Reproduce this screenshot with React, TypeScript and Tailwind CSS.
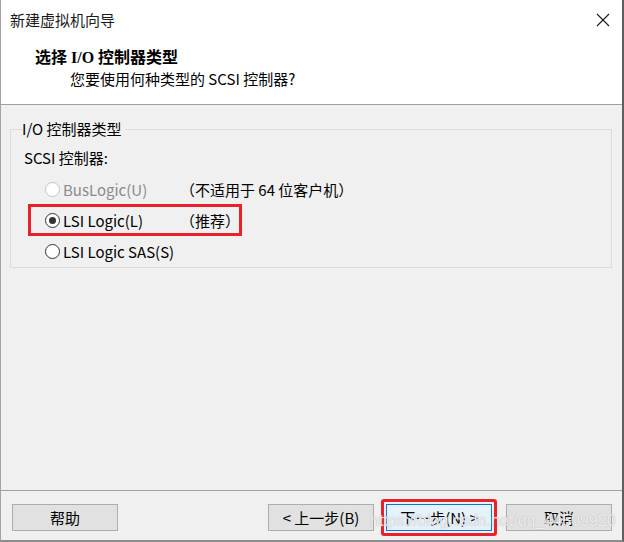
import React from 'react';

const font = { fontFamily: '"Noto Sans CJK SC", "Noto Sans", sans-serif' };

export default function App() {
  return (
    <div
      className="relative box-border flex h-[542px] w-[624px] flex-col border-b-2 border-l border-r-2 border-b-[#8c8c8c] border-l-[#a3a3a3] border-r-[#5f5f5f] bg-[#f0f0f0] text-[15px] text-black"
      style={font}
    >
      <header className="box-border h-[105px] border-b border-[#a0a0a0] bg-white">
        <div className="flex h-[40px] items-center justify-between pl-[9px] pr-[10px]">
          <span className="leading-[20px] text-[#1a1a1a]">新建虚拟机向导</span>
          <CloseIcon />
        </div>
        <h1 className="mt-[8px] pl-[34px] text-[16px] font-bold leading-[20px] [font-family:'Liberation_Serif','Noto_Sans_CJK_SC',serif]">
          选择 I/O 控制器类型
        </h1>
        <p className="mt-[1px] pl-[69px] leading-[20px]">您要使用何种类型的 SCSI 控制器?</p>
      </header>

      <main className="flex-1">
        <fieldset className="mx-[9px] mr-[10px] mt-[15px] border border-[#dcdcdc] pl-[11px] pr-[11px]">
          <legend className="pr-[3px] leading-[18px]">I/O 控制器类型</legend>
          <p className="ml-[2px] mt-[10px] leading-[20px]">SCSI 控制器:</p>
          <div className="mt-[6px]">
            <RadioRow label="BusLogic(U)" note="（不适用于 64 位客户机）" disabled />
            <div className="relative">
              <RadioRow label="LSI Logic(L)" note="（推荐）" checked />
              <div className="pointer-events-none absolute left-[6px] top-[-1px] h-[32px] w-[214px] border-[3px] border-[#e8212b]" />
            </div>
            <RadioRow label="LSI Logic SAS(S)" />
          </div>
        </fieldset>
      </main>

      <footer className="relative box-border flex h-[50px] items-start border-t border-[#a0a0a0] pl-[11px] pr-[10px] pt-[13px]">
        <Button>帮助</Button>
        <div className="flex-1" />
        <Button>&lt; 上一步(B)</Button>
        <div className="relative ml-[12px]">
          <Button primary>下一步(N) &gt;</Button>
          <div className="pointer-events-none absolute -inset-[5px] rounded-[3px] border-[3px] border-[#e8212b]" />
        </div>
        <div className="ml-[14px]">
          <Button>取消</Button>
        </div>
        <span className="pointer-events-none absolute left-[369px] top-[20px] text-[16px] leading-[20px] text-white/80 [font-family:'Liberation_Sans',sans-serif] [text-shadow:0_0_1px_#9a9a9a]">
          https://blog.csdn.net/qq_44509920
        </span>
      </footer>
    </div>
  );
}

function RadioRow({
  label,
  note,
  checked,
  disabled,
}: {
  label: string;
  note?: string;
  checked?: boolean;
  disabled?: boolean;
}) {
  return (
    <div className="flex h-[31px] items-center">
      <div className="flex w-[158px] items-center gap-[3px] pl-[23px]">
        <span
          className={
            'flex h-[15px] w-[15px] items-center justify-center rounded-full border bg-white ' +
            (disabled ? 'border-[#c4c4c4] bg-[#f7f7f7]' : 'border-[#333333]')
          }
        >
          {checked && <span className="h-[7px] w-[7px] rounded-full bg-[#333333]" />}
        </span>
        <span className={'leading-[20px] ' + (disabled ? 'text-[#8a8a8a]' : '')}>{label}</span>
      </div>
      {note && <span className="leading-[20px]">{note}</span>}
    </div>
  );
}

function Button({ children, primary }: { children: React.ReactNode; primary?: boolean }) {
  return (
    <button
      type="button"
      className={
        'box-border h-[27px] w-[106px] border text-[15px] leading-[20px] ' +
        (primary ? 'border-[#0078d7] bg-[#e5f1fb]' : 'border-[#adadad] bg-[#e1e1e1]')
      }
    >
      {children}
    </button>
  );
}

function CloseIcon() {
  return (
    <svg width="14" height="14" viewBox="0 0 14 14" className="mr-[2px]">
      <path d="M1 1 L13 13 M13 1 L1 13" stroke="#1a1a1a" strokeWidth="1.1" fill="none" />
    </svg>
  );
}
